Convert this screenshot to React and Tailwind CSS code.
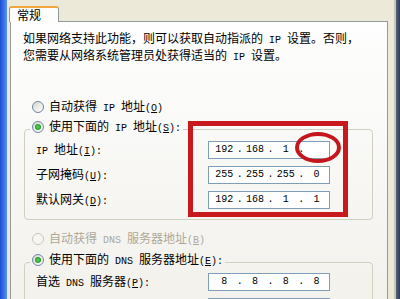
import React from "react";

function Mix({ s, className = "" }) {
  const parts = [];
  let buf = "";
  let type = null;
  const push = () => {
    if (buf) parts.push({ t: type, s: buf });
    buf = "";
  };
  let i = 0;
  while (i < s.length) {
    const c = s[i];
    if (c === "&") {
      push();
      parts.push({ t: "u", s: s[i + 1] });
      type = null;
      i += 2;
      continue;
    }
    const ty = c.charCodeAt(0) < 128 ? "a" : "c";
    if (ty !== type) {
      push();
      type = ty;
    }
    buf += c;
    i++;
  }
  push();
  return (
    <span className={"whitespace-pre " + className}>
      {parts.map((p, k) =>
        p.t === "c" ? (
          <span key={k}>{p.s}</span>
        ) : p.t === "u" ? (
          <span key={k} className="font-['Liberation_Mono',monospace] text-[10px] underline">
            {p.s}
          </span>
        ) : (
          <span key={k} className="font-['Liberation_Mono',monospace] text-[10px]">
            {p.s}
          </span>
        )
      )}
    </span>
  );
}

function Radio({ checked, disabled }) {
  return (
    <span
      className={
        "flex h-[12px] w-[12px] shrink-0 items-center justify-center rounded-full border " +
        (disabled
          ? "border-[#cac8bb] bg-[#f6f5f0]"
          : "border-[#6f86a6] bg-[linear-gradient(135deg,#d6d6cf,#ffffff)]")
      }
    >
      {checked && (
        <span className="h-[6px] w-[6px] rounded-full bg-[radial-gradient(circle,#5fd35f_0%,#21a121_70%,#9bd89b_100%)]" />
      )}
    </span>
  );
}

function IpField({ v }) {
  return (
    <div className="flex h-[18px] w-[122px] items-center border border-[#7f9db9] bg-white pl-[3px] font-['Liberation_Mono',monospace] text-[10px] text-black">
      <span className="w-[25px] text-center">{v[0]}</span>
      <span className="w-[6px] text-center">.</span>
      <span className="w-[25px] text-center">{v[1]}</span>
      <span className="w-[6px] text-center">.</span>
      <span className="w-[25px] text-center">{v[2]}</span>
      <span className="w-[6px] text-center">.</span>
      <span className="w-[25px] text-center">{v[3]}</span>
    </div>
  );
}

function Row({ label, v }) {
  return (
    <div className="flex h-[18px] items-center">
      <div className="w-[172px]">
        <Mix s={label} />
      </div>
      <IpField v={v} />
    </div>
  );
}

function Group({ legend, children }) {
  return (
    <fieldset className="ml-[13px] w-[349px] rounded-[4px] border border-[#d0d0bf]">
      <legend className="ml-[5px] px-[2px]">
        <div className="h-[20px]">
          <div className="flex h-[16px] items-center gap-[5px]">{legend}</div>
        </div>
      </legend>
      {children}
    </fieldset>
  );
}

export default function App() {
  return (
    <div className="relative flex h-[299px] w-[400px] overflow-hidden bg-[#ece9d8] font-['Noto_Sans_CJK_SC',sans-serif] text-[12px] leading-[14px] text-black">
      <div className="w-[7px] shrink-0 bg-[linear-gradient(90deg,#1d4fce,#3a74ea_60%,#5d92f2)]" />
      <div className="w-[3px] shrink-0" />
      <div className="flex w-[378px] shrink-0 flex-col pt-[6px]">
        <div className="relative z-10 -ml-[1px] flex h-[20px] w-[50px] items-center rounded-t-[3px] border-x border-t-[2px] border-x-[#919b9c] border-t-[#f0a63a] bg-[#fdfdfc] pl-[7px]">
          常规
        </div>
        <div className="-mt-[1px] flex flex-1 flex-col border border-[#919b9c] bg-[linear-gradient(180deg,#fefefe,#f1f0ea)]">
          <p className="whitespace-nowrap pl-[12px] pt-[9px]">
            <Mix s="如果网络支持此功能，则可以获取自动指派的 IP 设置。否则，" />
            <br />
            <Mix s="您需要从网络系统管理员处获得适当的 IP 设置。" />
          </p>

          <div className="ml-[21px] mt-[34px] flex h-[16px] items-center gap-[5px]">
            <Radio />
            <Mix s="自动获得 IP 地址(&O)" />
          </div>

          <div className="mt-[4px]">
            <Group
              legend={
                <>
                  <Radio checked />
                  <Mix s="使用下面的 IP 地址(&S):" />
                </>
              }
            >
              <div className="flex flex-col gap-[7px] pb-[10px] pl-[11px] pt-[2px]">
                <Row label="IP 地址(&I):" v={["192", "168", "1", ""]} />
                <Row label="子网掩码(&U):" v={["255", "255", "255", "0"]} />
                <Row label="默认网关(&D):" v={["192", "168", "1", "1"]} />
              </div>
            </Group>
          </div>

          <div className="ml-[21px] mt-[11px] flex h-[16px] items-center gap-[5px] text-[#aca899]">
            <Radio disabled />
            <Mix s="自动获得 DNS 服务器地址(&B)" />
          </div>

          <div className="mt-[5px]">
            <Group
              legend={
                <>
                  <Radio checked />
                  <Mix s="使用下面的 DNS 服务器地址(&E):" />
                </>
              }
            >
              <div className="flex flex-col gap-[7px] pb-[10px] pl-[11px] pt-[1px]">
                <Row label="首选 DNS 服务器(&P):" v={["8", "8", "8", "8"]} />
                <div className="flex h-[18px] items-center">
                  <div className="w-[172px]" />
                  <div className="h-[18px] w-[122px] border border-[#7f9db9] bg-white" />
                </div>
              </div>
            </Group>
          </div>
        </div>
      </div>
      <div className="w-[6px] shrink-0" />
      <div className="w-[2px] shrink-0 bg-[#c9c7bc]" />
      <div className="w-[4px] shrink-0 bg-[linear-gradient(90deg,#56647a,#2e3b52)]" />

      <div className="pointer-events-none absolute left-[188px] top-[121px] h-[96px] w-[160px] border-[5px] border-[#c81a1e]" />
      <div className="pointer-events-none absolute left-[295px] top-[132px] h-[31px] w-[46px] rounded-[50%] border-[4px] border-[#c4161c]" />
    </div>
  );
}
